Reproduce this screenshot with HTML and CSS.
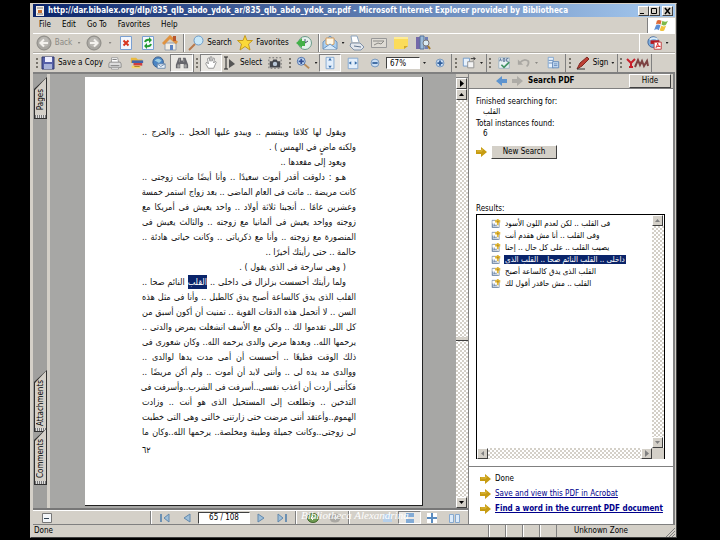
FILE: index.html
```html
<!DOCTYPE html>
<html lang="en">
<head>
<meta charset="utf-8">
<title>835_qlb_abdo_ydok_ar.pdf</title>
<link rel="stylesheet" href="styles.css">
</head>
<body>
<svg class="defs" aria-hidden="true">
  <symbol id="arrow-circle" viewBox="0 0 16 16"><circle cx="8" cy="8" r="7" fill="#a9a7a2" stroke="#8b8984"/><circle cx="8" cy="7" r="5" fill="#bbb9b4"/><path d="M12 8H5M8 4.500L4.500 8L8 11.500" fill="none" stroke="#f4f2ee" stroke-width="2"/></symbol>
  <symbol id="gold" viewBox="0 0 11 10"><path d="M0 3H5V0L11 5L5 10V7H0Z" fill="#c79c12"/><path d="M1 4H6V2" fill="none" stroke="#dfbc45"/></symbol>
  <symbol id="hit" viewBox="0 0 10 10"><path d="M0.500 1.500H8.500V9.500H0.500Z" fill="#fff" stroke="#8396ae"/><path d="M1 5V9H7M2 7H6M3 5V8" stroke="#6d87a9" fill="none"/><path d="M6 0h2v1h2v3h-2v3h-2v-3h-2v-3h2z" fill="#e2b93a"/><path d="M6 2h2v2h-2z" fill="#b98d1d"/></symbol>
  <symbol id="up" viewBox="0 0 7 7"><path d="M1 5H6L3.500 2Z"/></symbol>
  <symbol id="down" viewBox="0 0 7 7"><path d="M1 2H6L3.500 5Z"/></symbol>
  <symbol id="left" viewBox="0 0 7 7"><path d="M5 1V6L2 3.500Z"/></symbol>
  <symbol id="right" viewBox="0 0 7 7"><path d="M2 0V7L6 3.500Z"/></symbol>
  <symbol id="tri" viewBox="0 0 8 10"><path d="M1 1V9L7 5Z" fill="#9fc0da" stroke="#6288ac"/></symbol>
  <symbol id="printer" viewBox="0 0 16 16"><path d="M4 7V2H11L12 7" fill="#fff" stroke="#999"/><path d="M2 7H14L15 9V13H1V9Z" fill="#ddd" stroke="#888"/><path d="M3 11H13M5 4H10" stroke="#777"/><path d="M4 13H12V15H4Z" fill="#f8f8f8" stroke="#999"/></symbol>
</svg>

<div class="window">
  <header class="titlebar">
    <svg class="app" viewBox="0 0 10 10"><path d="M1 0H9V10H1Z" fill="#f5efe6"/><path d="M2 2H8M2 8H8" stroke="#777"/><path d="M3 4H7V7H3Z" fill="#c96f32"/></svg>
    <h1>http://dar.bibalex.org/dlp/835_qlb_abdo_ydok_ar/835_qlb_abdo_ydok_ar.pdf - Microsoft Internet Explorer provided by Bibliotheca</h1>
    <div class="winbtns">
      <button aria-label="Minimize"><svg viewBox="0 0 9 8"><path d="M1 6.500H5" stroke="#000"/></svg></button>
      <button aria-label="Maximize"><svg viewBox="0 0 9 8"><path d="M1.500 1.500H6.500V6.500H1.500Z" fill="none" stroke="#000"/></svg></button>
      <button class="close" aria-label="Close"><svg viewBox="0 0 9 8"><path d="M2 1L7 7M7 1L2 7" stroke="#000" stroke-width="1.500"/></svg></button>
    </div>
  </header>

  <nav class="menubar">
    <button>File</button><button>Edit</button><button>Go To</button><button>Favorites</button><button>Help</button>
    <span class="flag"><svg viewBox="0 0 16 14"><path d="M3 2Q5 0 8 2L7 6Q4 4 2 6Z" fill="#dd6a36"/><path d="M9 2Q12 4 15 2L13 6Q11 8 8 6Z" fill="#7db94a"/><path d="M2 7Q4 5 7 7L5 12Q3 10 0 12Z" fill="#5c8fd6"/><path d="M8 7Q10 9 13 7L11 12Q9 14 6 12Z" fill="#f0c23c"/></svg></span>
  </nav>

  <div class="toolbar browser">
    <button class="dim"><svg viewBox="0 0 16 16"><use href="#arrow-circle"/></svg>Back</button>
    <span class="caret dim"></span>
    <button class="flip" aria-label="Forward"><svg viewBox="0 0 16 16"><use href="#arrow-circle"/></svg></button>
    <span class="caret dim"></span>
    <button aria-label="Stop"><svg viewBox="0 0 16 16"><path d="M2.500 1.500H13.500V14.500H2.500Z" fill="#f4f7fc" stroke="#7aa0d2"/><path d="M5.500 5.500L10.500 10.500M10.500 5.500L5.500 10.500" stroke="#d8351e" stroke-width="2"/></svg></button>
    <button aria-label="Refresh"><svg viewBox="0 0 16 16"><path d="M2.500 1.500H13.500V14.500H2.500Z" fill="#f4f7fc" stroke="#7aa0d2"/><path d="M5 7Q6 4 10 5M11 9Q10 12 6 11" fill="none" stroke="#219a30" stroke-width="2"/><path d="M9 2L12 5L9 8ZM7 8L4 11L7 14Z" fill="#219a30"/></svg></button>
    <button aria-label="Home"><svg viewBox="0 0 16 16"><path d="M3 8H14V15H3Z" fill="#f1ede4" stroke="#97a0ae"/><path d="M1 9L8 2L15 8" fill="none" stroke="#e09340" stroke-width="3"/><path d="M8 10H11V15H8Z" fill="#5b82c4"/><path d="M11 1H14V6H11Z" fill="#b8562d"/></svg></button>
    <span class="sep"></span>
    <button><svg viewBox="0 0 16 16"><path d="M1 15L7 9" stroke="#b8794c" stroke-width="2"/><circle cx="10.500" cy="5.500" r="4.500" fill="#c9e8f8" stroke="#6d9cc9"/></svg>Search</button>
    <button><svg viewBox="0 0 16 16"><path d="M8 0.500L10 5.500H15.500L11.500 9L13 15L8 11.500L3 15L4.500 9L0.500 5.500H6Z" fill="#fbd938" stroke="#c59a1f"/></svg>Favorites</button>
    <button aria-label="History"><svg viewBox="0 0 16 16"><circle cx="9" cy="8" r="6.500" fill="#e7f1ee" stroke="#6b9a89"/><path d="M9 4V8L12 6" fill="none" stroke="#456"/><path d="M0 8L6 3V6H9V11H6V13Z" fill="#43b048"/></svg></button>
    <span class="sep"></span>
    <button aria-label="Mail"><svg viewBox="0 0 16 16"><path d="M1 7L8 1L15 7V14H1Z" fill="#a9cff0" stroke="#6b94bf"/><path d="M4 3H12V9L8 11L4 9Z" fill="#fff8e6" stroke="#d69c5a"/><path d="M1 14L8 9L15 14" fill="#d7eafa" stroke="#6b94bf"/></svg></button>
    <span class="caret"></span>
    <button aria-label="Print"><svg viewBox="0 0 16 16"><path d="M3 7L2 1H8L10 7" fill="#fff" stroke="#8da6c0"/><path d="M2 8H11L15 12L12 15H5L1 11Z" fill="#e3e7ed" stroke="#7f91a8"/><path d="M5 11L12 12" stroke="#60758f"/></svg></button>
    <button aria-label="Edit"><svg viewBox="0 0 16 16"><path d="M0.500 3.500H15.500V12.500H0.500Z" fill="#dedbd4" stroke="#999"/><path d="M2 6H13M3 10L7 8L10 9L13 6" fill="none" stroke="#8a8985"/></svg></button>
    <button aria-label="Discuss"><svg viewBox="0 0 16 16"><path d="M1 2H15V11L11 14H1Z" fill="#fbdc5a"/><path d="M11 14V11H15" fill="#d1a72a"/><path d="M1 2H15V4H1Z" fill="#fdeb97"/></svg></button>
    <button aria-label="Research"><svg viewBox="0 0 16 16"><path d="M1 2H5V14H1Z" fill="#7469a9"/><path d="M5 1H9V14H5Z" fill="#9bbbd9" stroke="#55739b"/><path d="M10 2H13V14H10Z" fill="#6f7fb7"/><circle cx="11" cy="8" r="3" fill="#dcecf4" stroke="#777"/><path d="M13 11L15 14" stroke="#a77b2b" stroke-width="2"/></svg></button>
    <span></span>
    <button class="adobe" aria-label="Convert to PDF"><svg viewBox="0 0 18 16"><circle cx="7" cy="7" r="6" fill="#7faedc" stroke="#3b5f95"/><path d="M3 4Q8 1 12 4" fill="none" stroke="#dcecf8" stroke-width="2"/><path d="M4 5H14V9H4Z" fill="#b61820"/><path d="M8 7H16V15H8Z" fill="#fff" stroke="#b33"/><path d="M10 13Q12 10 12 8Q12 12 15 12Q12 11 10 13" fill="none" stroke="#d22"/></svg><span class="caret"></span></button>
  </div>

  <div class="toolbar reader">
    <span class="grip"></span>
    <button><svg viewBox="0 0 14 14"><path d="M1 1H13V13H1Z" fill="#5660a8" stroke="#31396f"/><path d="M4 1H11V6H4Z" fill="#eef"/><path d="M3 8H11V13H3Z" fill="#a9b3d8"/></svg>Save a Copy</button>
    <button aria-label="Print"><svg viewBox="0 0 16 16"><use href="#printer"/></svg></button>
    <button aria-label="Organizer"><svg viewBox="0 0 16 16"><path d="M1 2H7L9 4H14V8H1Z" fill="#e9b93f"/><path d="M2 5H15V8H2Z" fill="#4362a8"/><path d="M4 8H14V11H4Z" fill="#cf3e3e"/><path d="M2 11H12V14H2Z" fill="#f4d669"/><path d="M5 12H11" stroke="#a67b1e"/></svg></button>
    <button aria-label="Web"><svg viewBox="0 0 16 16"><circle cx="7" cy="7" r="6" fill="#4c86c4" stroke="#2d5587"/><path d="M3 5Q7 1 11 5L8 8Q5 6 3 5" fill="#9fcde2"/><path d="M6 9H15V14H6Z" fill="#edf4fb" stroke="#6787aa"/><path d="M6 9L10 12L15 9" fill="none" stroke="#6787aa"/></svg></button>
    <button class="on" aria-label="Find"><svg viewBox="0 0 16 16"><path d="M4 2H7V5H9V2H12L15 10V14H10V9H6V14H1V10Z" fill="#66666c"/><path d="M3 10H5V13H3ZM11 10H13V13H11ZM5 3V7M10 3V7" fill="#aaa" stroke="#999"/></svg></button>
    <span class="grip line"></span>
    <button class="on" aria-label="Hand"><svg viewBox="0 0 16 16"><path d="M5 14L2 9L3 7L5 9L4 3L6 2L7 6V1H9V6L11 2L12 3L11 8L13 6L14 7L11 14Z" fill="#fff" stroke="#8b8b8b"/></svg></button>
    <button><svg viewBox="0 0 14 14"><path d="M1 1H5M1 13H5M3 1V13" stroke="#222"/><path d="M6 3V12L12 8Z" fill="#555"/></svg>Select</button>
    <button aria-label="Snapshot"><svg viewBox="0 0 16 16"><path d="M1 2H15V14H1Z" fill="none" stroke="#666" stroke-dasharray="2 2"/><path d="M2 6H5L6 4H10L11 6H14V13H2Z" fill="#44474d"/><circle cx="8" cy="9" r="2.500" fill="#b9c8d8"/></svg></button>
    <span class="grip"></span>
    <button aria-label="Zoom In"><svg viewBox="0 0 16 16"><path d="M9 9L15 14" stroke="#b98b57" stroke-width="2"/><circle cx="6" cy="6" r="4.500" fill="#c5ddf6" stroke="#4567a4"/><path d="M3 6H9M6 3V9" stroke="#334f94" stroke-width="2"/></svg></button>
    <span class="caret"></span>
    <button class="on" aria-label="Fit Page"><svg viewBox="0 0 16 16"><path d="M3.500 1.500H12.500V14.500H3.500Z" fill="#e2eefb" stroke="#7fa5cf"/><path d="M6 5L8 2L10 5ZM6 11L8 14L10 11Z" fill="#376da9"/></svg></button>
    <button aria-label="Fit Width"><svg viewBox="0 0 16 16"><path d="M2.500 2.500H13.500V14.500H2.500Z" fill="#e2eefb" stroke="#7fa5cf"/><path d="M6 6V10L3 8ZM10 6V10L13 8Z" fill="#376da9"/></svg></button>
    <button aria-label="Zoom Out"><svg viewBox="0 0 16 16"><circle cx="8" cy="8" r="4.500" fill="#c9ddf3" stroke="#6c8fb8"/><path d="M5 8H11" stroke="#315f9b" stroke-width="2"/></svg></button>
    <input class="zoom" type="text" value="67%" aria-label="Zoom level">
    <span class="caret"></span>
    <button aria-label="Zoom In Step"><svg viewBox="0 0 16 16"><circle cx="8" cy="8" r="4.500" fill="#c9ddf3" stroke="#6c8fb8"/><path d="M5 8H11M8 5V11" stroke="#315f9b" stroke-width="2"/></svg></button>
    <span class="grip line"></span>
    <button aria-label="Rotate"><svg viewBox="0 0 16 16"><path d="M1.500 2.500H8.500V11.500H1.500Z" fill="#e7f1fc" stroke="#6d97c6"/><path d="M6.500 6.500H13.500V13.500H6.500Z" fill="#f4f4f4" stroke="#8b8b8b"/><path d="M10 3H15M13 1L15 3L13 5" fill="none" stroke="#222"/></svg></button>
    <span class="caret"></span>
    <span class="grip line"></span>
    <button aria-label="Spelling"><svg viewBox="0 0 16 16"><path d="M2 2H14V14H2Z" fill="#e9f1f5" stroke="#9fb2c0"/><path d="M3 6L4 3L5 6M7 3V6H9V3ZM13 3H11V6H13" fill="none" stroke="#48648b"/><path d="M5 10L8 13L14 7" fill="none" stroke="#429365" stroke-width="2"/></svg></button>
    <button aria-label="Undo"><svg viewBox="0 0 16 16"><path d="M3 8Q8 2 13 6Q14 9 11 12" fill="none" stroke="#a9a7a2" stroke-width="2"/><path d="M1 4V10H7Z" fill="#a9a7a2"/></svg></button>
    <span class="caret dim"></span>
    <button aria-label="Compare"><svg viewBox="0 0 16 16"><path d="M2.500 1.500H8.500V13.500H2.500Z" fill="#e7f1fc" stroke="#7fa5cf"/><path d="M7.500 6.500H14.500V13.500H7.500Z" fill="#c9def5" stroke="#5b84b6"/><path d="M3 5H8M3 8H7M9 9H13M9 11H13" stroke="#5b84b6"/></svg></button>
    <span class="grip line"></span>
    <button><svg viewBox="0 0 14 14"><path d="M1 13L4 7L11 1L13 3L6 10Z" fill="#bd4035" stroke="#7f2922"/><path d="M1 13H9" stroke="#333"/></svg>Sign <span class="caret"></span></button>
    <span class="grip line"></span>
    <button class="yahoo" aria-label="Yahoo"><svg viewBox="0 0 24 12"><path d="M1 2L5 6L9 2M5 6V10M3 10H7" fill="none" stroke="#c8202c" stroke-width="2"/><path d="M9 10L12 3L14 8L16 4L18 9L21 4L22 9" fill="none" stroke="#7c4242" stroke-width="2"/></svg></button>
    <span></span>
  </div>

  <main class="workspace">
    <section class="viewer">
      <div class="docarea">
        <div class="tabs">
          <button class="tab first"><span>Pages</span></button>
          <button class="tab second"><span>Attachments</span></button>
          <button class="tab third"><span>Comments</span></button>
        </div>
        <div class="canvas">
          <article class="page" lang="ar" dir="rtl">
            <p class="indent">ويقول لها كلامًا ويبتسم .. ويبدو عليها الخجل .. والحرج ..</p>
            <p class="short">ولكنه ماضٍ في الهمس ) .</p>
            <p class="indent short">ويعود إلى مقعدها ..</p>
            <p class="indent">هـو : دلوقت أقدر أموت سعيدًا .. وأنا أيضًا ماتت زوجتى ..</p>
            <p>كانت مريضة .. ماتت فى العام الماضى .. بعد زواج استمر خمسة</p>
            <p>وعشرين عامًا .. أنجبنا ثلاثة أولاد .. واحد يعيش فى أمريكا مع</p>
            <p>زوجته وواحد يعيش فى ألمانيا مع زوجته .. والثالث يعيش فى</p>
            <p>المنصورة مع زوجته .. وأنا مع ذكرياتى .. وكانت حياتى هادئة ..</p>
            <p class="short">حالمة .. حتى رأيتك أخيرًا ..</p>
            <p class="indent short">( وهى سارحة فى الذى يقول ) .</p>
            <p class="indent">ولما رأيتك أحسست بزلزال فى داخلى .. <mark>القلب</mark> النائم صحا ..</p>
            <p>القلب الذى يدق كالساعة أصبح يدق كالطبل .. وأنا فى مثل هذه</p>
            <p>السن .. لا أتحمل هذه الدقات القوية .. تمنيت أن أكون أسبق من</p>
            <p>كل اللى تقدموا لك .. ولكن مع الأسف انشغلت بمرض والدتى ..</p>
            <p>يرحمها الله.. وبعدها مرض والدى يرحمه الله.. وكان شعورى فى</p>
            <p>ذلك الوقت فظيعًا .. أحسست أن أمى مدت يدها لوالدى ..</p>
            <p>ووالدى مد يده لى .. وأننى لابد أن أموت .. ولم أكن مريضًا ..</p>
            <p>فكأننى أردت أن أعذب نفسى..أسرفت فى الشرب..وأسرفت فى</p>
            <p>التدخين .. وتطلعت إلى المستحيل الذى هو أنت .. وزادت</p>
            <p>الهموم..وأعتقد أننى مرضت حتى زارتنى خالتى وهى التى خطبت</p>
            <p>لى زوجتى..وكانت جميلة وطيبة ومخلصة.. يرحمها الله..وكان ما</p>
            <footer>٦٢</footer>
          </article>
        </div>
        <div class="vscroll">
          <span class="split"></span>
          <button aria-label="Expand"><svg viewBox="0 0 7 7"><use href="#right"/></svg></button>
          <button aria-label="Scroll up"><svg viewBox="0 0 7 7"><use href="#up"/></svg></button>
          <div class="track"><span class="thumb"></span></div>
          <button aria-label="Scroll down"><svg viewBox="0 0 7 7"><use href="#down"/></svg></button>
        </div>
      </div>
      <div class="navbar">
        <button class="hidebtn" aria-label="Hide toolbars"><svg viewBox="0 0 10 10"><path d="M0.500 0.500H9.500V9.500H0.500Z" fill="#f3f6f9" stroke="#777"/><path d="M2 5.500H7" stroke="#345"/></svg></button>
        <span class="sep"></span>
        <button aria-label="First page"><svg viewBox="0 0 12 10"><path d="M1 1H3V9H1Z" fill="#6c90b2"/><path d="M10 1V9L5 5Z" fill="#9fc0da" stroke="#6288ac"/></svg></button>
        <button class="flip" aria-label="Previous page"><svg viewBox="0 0 8 10"><use href="#tri"/></svg></button>
        <input type="text" value="65 / 108" aria-label="Page">
        <button aria-label="Next page"><svg viewBox="0 0 8 10"><use href="#tri"/></svg></button>
        <button class="flip" aria-label="Last page"><svg viewBox="0 0 12 10"><path d="M1 1H3V9H1Z" fill="#6c90b2"/><path d="M10 1V9L5 5Z" fill="#9fc0da" stroke="#6288ac"/></svg></button>
        <span class="sep"></span>
        <button aria-label="Previous view"><svg viewBox="0 0 12 10"><ellipse cx="6" cy="5" rx="5.500" ry="4.500" fill="#6f9b52" stroke="#44682f"/><path d="M9 5H4M6 3L4 5L6 7" fill="none" stroke="#fff"/></svg></button>
        <button aria-label="Next view"><svg viewBox="0 0 12 10"><ellipse cx="6" cy="5" rx="5.500" ry="4.500" fill="#aaa8a3"/><path d="M3 5H8M6 3L8 5L6 7" fill="none" stroke="#ddd"/></svg></button>
        <span class="sep"></span>
        <button aria-label="Single page"><svg viewBox="0 0 12 10"><path d="M2 1H11V9H2Z" fill="#b5cfea"/></svg></button>
        <button class="on" aria-label="Continuous"><svg viewBox="0 0 12 10"><path d="M2 0H10V4H2ZM2 6H10V10H2Z" fill="#82abd6"/></svg></button>
        <button aria-label="Continuous facing"><svg viewBox="0 0 12 10"><path d="M1 0H5V4H1ZM7 0H11V4H7ZM1 6H5V10H1ZM7 6H11V10H7Z" fill="#fff"/><path d="M6 0V10M1 5H11" stroke="#5a8cc0" stroke-width="2"/></svg></button>
        <button aria-label="Facing"><svg viewBox="0 0 12 10"><path d="M1.500 1.500H5.500V9.500H1.500ZM7.500 1.500H11.500V9.500H7.500Z" fill="#dcebfa" stroke="#86a9cf"/></svg></button>
        <span class="watermark">Bibliotheca Alexandrina</span>
      </div>
    </section>

    <aside class="side">
      <div class="sidehead">
        <svg class="arrow" viewBox="0 0 11 10"><path d="M11 3H6V0L0 5L6 10V7H11Z" fill="#5e94cf"/></svg>
        <svg class="arrow" viewBox="0 0 11 10"><path d="M0 3H5V0L11 5L5 10V7H0Z" fill="#aeaca7"/></svg>
        <h2>Search PDF</h2>
        <button class="raised">Hide</button>
      </div>
      <div class="sidebody">
        <dl>
          <dt>Finished searching for:</dt><dd lang="ar">القلب</dd>
          <dt>Total instances found:</dt><dd>6</dd>
        </dl>
        <div class="newsearch"><svg class="arrow" viewBox="0 0 11 10"><use href="#gold"/></svg><button class="raised">New Search</button></div>
        <h3>Results:</h3>
        <div class="results">
          <ul lang="ar">
            <li><svg viewBox="0 0 10 10"><use href="#hit"/></svg><span dir="rtl">فى القلب .. لكن لعدم اللون الأسود</span></li>
            <li><svg viewBox="0 0 10 10"><use href="#hit"/></svg><span dir="rtl">وفى القلب .. أنا مش هقدم أنت</span></li>
            <li><svg viewBox="0 0 10 10"><use href="#hit"/></svg><span dir="rtl">يصيب القلب .. على كل حال .. إحنا</span></li>
            <li class="sel"><svg viewBox="0 0 10 10"><use href="#hit"/></svg><span dir="rtl">داخلى .. القلب النائم صحا .. القلب الذى</span></li>
            <li><svg viewBox="0 0 10 10"><use href="#hit"/></svg><span dir="rtl">القلب الذى يدق كالساعة أصبح</span></li>
            <li><svg viewBox="0 0 10 10"><use href="#hit"/></svg><span dir="rtl">القلب .. مش حاقدر أقول لك</span></li>
          </ul>
          <div class="rv"><button aria-label="Up"><svg viewBox="0 0 7 7"><use href="#up"/></svg></button><div class="track"></div><button aria-label="Down"><svg viewBox="0 0 7 7"><use href="#down"/></svg></button></div>
          <div class="rh"><button aria-label="Left"><svg viewBox="0 0 7 7"><use href="#left"/></svg></button><div class="track"></div><button aria-label="Right"><svg viewBox="0 0 7 7"><use href="#right"/></svg></button></div>
          <span class="corner"></span>
        </div>
      </div>
      <div class="links">
        <div><svg class="arrow" viewBox="0 0 11 10"><use href="#gold"/></svg><a class="plain" href="#done">Done</a></div>
        <div><svg class="arrow" viewBox="0 0 11 10"><use href="#gold"/></svg><a href="#save">Save and view this PDF in Acrobat</a></div>
        <div><svg class="arrow" viewBox="0 0 11 10"><use href="#gold"/></svg><a class="strong" href="#find">Find a word in the current PDF document</a></div>
      </div>
    </aside>
  </main>

  <footer class="status">
    <span class="msg">Done</span><i></i><i></i><i></i><i></i><span class="zone">Unknown Zone</span>
    <svg viewBox="0 0 10 10"><path d="M1 10L10 1M4 10L10 4M7 10L10 7" stroke="#808080"/></svg>
  </footer>
</div>
</body>
</html>
```
FILE: styles.css
```css
* { box-sizing: border-box; }
body {
  margin: 0;
  background: #000;
  color: #000;
  font: 8px/10px "DejaVu Sans Condensed", "DejaVu Sans", sans-serif;
}
.defs { position: absolute; width: 0; height: 0; }
h1, h2, h3, p, dl, dd, ul { margin: 0; padding: 0; font-size: inherit; }
button, input { font: inherit; color: inherit; border: 0; padding: 0; margin: 0; border-radius: 0; }
button { background: none; white-space: nowrap; }
svg { display: block; flex: none; }

.window {
  display: flex;
  flex-direction: column;
  height: calc(100vh - 5px);
  margin: 3px 43px 2px 30px;
  padding: 0 1px 0 2px;
  background: #d4d0c8;
  border: 1px solid #d4d0c8;
  border-right-color: #404040;
  border-bottom-color: #404040;
}

.titlebar {
  display: flex;
  align-items: center;
  gap: 3px;
  flex: none;
  height: 13px;
  padding: 0 2px;
  background: linear-gradient(90deg, #0a246a, #a6caf0);
}
.titlebar .app { width: 10px; height: 10px; }
.titlebar h1 { flex: 1; min-width: 0; overflow: hidden; color: #fff; font-weight: bold; white-space: nowrap; }
.winbtns { display: flex; }
.winbtns button { width: 11px; height: 10px; background: #d4d0c8; border: 1px solid; border-color: #fff #404040 #404040 #fff; }
.winbtns .close { margin-left: 2px; }
.winbtns svg { width: 9px; height: 8px; }

.menubar { display: flex; align-items: center; gap: 11px; flex: none; height: 16px; padding-left: 6px; }
.flag { display: flex; justify-content: center; align-items: center; width: 28px; height: 15px; margin-left: auto; background: #fff; border-left: 1px solid #808080; }
.flag svg { width: 15px; height: 13px; }

.toolbar { display: grid; align-items: center; flex: none; height: 20px; border-top: 1px solid #fff; border-bottom: 1px solid #b0aca4; }
.toolbar > * { height: 18px; }
.toolbar button { display: flex; align-items: center; justify-content: center; gap: 3px; }
.toolbar svg { width: 16px; height: 16px; }
.browser { grid-template-columns: 42px 8px 22px 10px 22px 22px 22px 5px 48px 58px 24px 4px 20px 6px 22px 22px 22px 22px 1fr 36px; }
.reader { grid-template-columns: 7px 64px 22px 22px 22px 23px 7px 22px 41px 23px 7px 20px 6px 22px 23px 22px 34px 9px 22px 9px 17px 9px 7px 22px 18px 7px 25px 8px 44px 7px 28px 1fr; border-bottom-color: #808080; }
.reader button svg { width: 14px; height: 14px; }
.reader .yahoo svg { width: 24px; height: 12px; }
.reader .yahoo { border-right: 1px solid #808080; }
.dim { color: #8b8984; }
.flip svg { transform: scaleX(-1); }
.caret { display: grid; place-items: center; }
.caret::before { content: ""; width: 3px; height: 2px; background: #222; clip-path: polygon(0 0, 100% 0, 50% 100%); }
.caret.dim::before { background: #8b8984; }
.sep { border-left: 1px solid #808080; box-shadow: inset 1px 0 #fff; margin-left: 2px; }
.grip { display: grid; place-items: center; }
.grip::before { content: ""; width: 2px; height: 10px; background: repeating-linear-gradient(#77736b 0 2px, transparent 2px 4px); }
.line { border-left: 1px solid #808080; }
.toolbar .on, .navbar .on { background: #eae8e4; border: 1px solid; border-color: #808080 #fff #fff #808080; }
.adobe { border-left: 1px solid #fff; }
.reader .zoom { height: 12px; padding: 0 3px; background: #fff; border: 1px solid; border-color: #404040 #fff #fff #404040; }

.workspace { display: grid; grid-template-columns: minmax(0, 1fr) 207px; flex: 1; min-height: 0; }
.viewer { display: flex; flex-direction: column; min-width: 0; min-height: 0; }
.docarea { display: flex; flex: 1; min-height: 0; background: #a7a7a5; border-top: 1px solid #808080; border-bottom: 2px solid #777; }
.tabs { display: flex; flex-direction: column; flex: none; width: 17px; padding: 3px 0 23px 1px; background: #a0a09e; border-right: 3px solid #d4d0c8; }
.tab { position: relative; display: grid; place-items: center; width: 13px; height: 42px; padding-top: 4px; background: #303030; clip-path: polygon(0 12px, 100% 0, 100% 100%, 0 100%); }
.tab::before { content: ""; position: absolute; inset: 1px; background: #d4d0c8; clip-path: polygon(0 12px, 100% 0, 100% 100%, 0 100%); }
.tab::after { content: ""; position: absolute; right: 1px; bottom: 1px; left: 1px; height: 3px; background: repeating-linear-gradient(90deg, #777 0 1px, #ddd 1px 2px); }
.tab span { position: relative; writing-mode: vertical-rl; transform: rotate(180deg); line-height: 11px; }
.tab.second { height: 62px; margin-top: auto; }
.tab.third { height: 57px; margin-top: -4px; }
.canvas { flex: 1; min-width: 0; padding: 3px 33px 2px 35px; }
.page { display: flex; flex-direction: column; height: 100%; padding: 48px 66px 0 57px; background: #fff; border: solid #222; border-width: 0 1px 1px 0; font: 9px/15px "DejaVu Sans Condensed", "DejaVu Sans", sans-serif; color: #111; }
.page p { height: 15px; white-space: nowrap; text-align: justify; text-align-last: justify; }
.page p.short { text-align-last: start; }
.page p.indent { padding-right: 10px; }
.page mark { display: inline-block; height: 14px; line-height: 14px; background: #0a246a; color: #fff; }
.page footer { margin-top: 3px; direction: ltr; }

.vscroll { display: flex; flex-direction: column; flex: none; width: 12px; background: #d4d0c8; }
.vscroll .split { height: 4px; border-bottom: 1px solid #808080; }
.vscroll button, .rv button, .rh button { display: grid; place-items: center; flex: none; width: 11px; height: 11px; background: #d4d0c8; border: 1px solid; border-color: #fff #404040 #404040 #fff; }
.vscroll svg, .rv svg, .rh svg { width: 7px; height: 7px; }
.rv svg, .rh svg { fill: #808080; }
.track { flex: 1; background: repeating-conic-gradient(#d4d0c8 0 25%, #fff 0 50%) 0 0 / 4px 4px; }
.thumb { display: block; height: 4px; margin-top: 237px; background: #d4d0c8; border-bottom: 1px solid #404040; }

.navbar { position: relative; display: grid; grid-template-columns: 115px 6px 22px 22px 52px 21px 22px 9px 22px 22px 30px 22px 23px 22px 22px; align-items: center; flex: none; height: 15px; border-top: 1px solid #fff; border-bottom: 1px solid #808080; }
.navbar button { display: grid; place-items: center; height: 13px; }
.navbar .hidebtn { justify-items: start; padding-left: 8px; }
.navbar svg { width: 12px; height: 10px; }
.navbar .sep { height: 13px; }
.navbar input { width: 100%; height: 12px; text-align: center; background: #fff; border: 1px solid; border-color: #404040 #fff #fff #404040; }
.watermark { position: absolute; left: 268px; top: -3px; color: #fff; font: italic 11px/14px "Liberation Serif", serif; white-space: nowrap; }

.side { display: flex; flex-direction: column; background: #fff; border: solid #808080; border-width: 1px 2px 1px 1px; }
.sidehead { display: flex; align-items: center; gap: 5px; height: 15px; padding: 0 2px 0 27px; background: #d4d0c8; border-bottom: 1px solid #808080; }
.arrow { width: 11px; height: 10px; }
.raised { background: #d4d0c8; border: 1px solid; border-color: #fff #404040 #404040 #fff; }
.sidehead .raised { width: 42px; height: 14px; margin-left: auto; }
.sidebody { display: flex; flex-direction: column; flex: 1; min-height: 0; padding: 7px 8px 7px 7px; }
.sidebody dt { line-height: 11px; }
.sidebody dd { margin-bottom: 1px; padding-left: 7px; line-height: 10px; }
.newsearch { display: flex; align-items: center; gap: 4px; margin-top: 5px; }
.newsearch .raised { width: 66px; height: 14px; }
.sidebody h3 { margin-top: 45px; font-weight: normal; }
.results { display: grid; grid-template: minmax(0, 1fr) 11px / minmax(0, 1fr) 12px; flex: 1; min-height: 0; border: solid #000; border-width: 1px 1px 0; }
.results ul { padding: 2px 0 0 14px; list-style: none; overflow: hidden; }
.results li { display: flex; align-items: center; gap: 3px; height: 12px; white-space: nowrap; }
.results li svg { width: 10px; height: 9px; }
.results li span { padding: 0 1px; line-height: 9px; }
.results .sel span { background: #0a246a; color: #fff; }
.rv { display: flex; flex-direction: column; }
.rh { display: flex; }
.corner { background: #d4d0c8; }
.links { display: flex; flex-direction: column; gap: 5px; height: 58px; padding: 7px 0 0 11px; border-top: 1px solid #808080; }
.links div { display: flex; align-items: center; gap: 4px; }
.links a { color: #00008b; white-space: nowrap; }
.links .plain { color: #000; text-decoration: none; }
.links .strong { font-weight: bold; }

.status { display: flex; align-items: stretch; flex: none; height: 12px; line-height: 12px; }
.status .msg { flex: 1; padding-left: 1px; }
.status i { width: 17px; border-left: 1px solid #808080; box-shadow: inset 1px 0 #fff; }
.status .zone { width: 109px; padding-left: 17px; border-left: 1px solid #808080; }
.status svg { width: 10px; height: 10px; align-self: end; }
```
